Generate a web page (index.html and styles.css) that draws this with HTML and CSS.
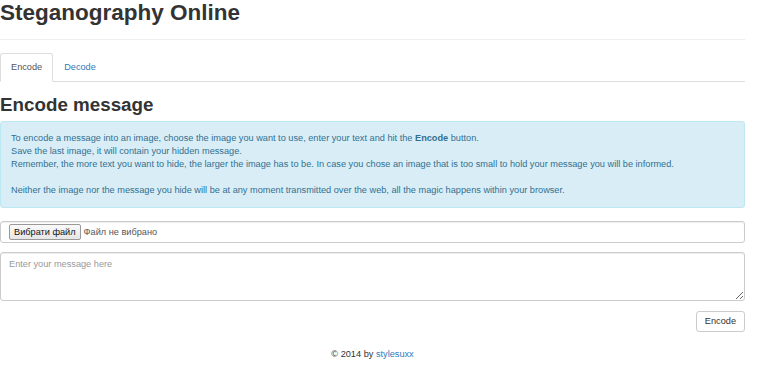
FILE: index.html
```html
<!DOCTYPE html>
<html lang="en">
<head>
    <meta charset="UTF-8">
    <title>Steganography Online</title>
    <link rel="stylesheet" href="styles.css">
</head>
<body>
    <div class="container">
        <div class="page-header">
            <h1>Steganography Online</h1>
        </div>

        <!-- Tabs -->
        <ul class="nav-tabs">
            <li class="active"><a href="#">Encode</a></li>
            <li><a href="#">Decode</a></li>
        </ul>

        <h2>Encode message</h2>

        <div class="alert">
            To encode a message into an image, choose the image you want to use, enter your text and hit the <strong>Encode</strong> button.<br>
            Save the last image, it will contain your hidden message.<br>
            Remember, the more text you want to hide, the larger the image has to be. In case you chose an image that is too small to hold your message you will be informed.<br>
            <br>
            Neither the image nor the message you hide will be at any moment transmitted over the web, all the magic happens within your browser.
        </div>

        <div class="form-control file-field">
            <button class="file-btn" type="button">Вибрати файл</button>
            <span class="file-name">Файл не вибрано</span>
        </div>

        <textarea class="form-control message" placeholder="Enter your message here"></textarea>

        <div class="actions">
            <button class="btn" type="button">Encode</button>
        </div>

        <footer class="footer">
            &copy; 2014 by <a href="#">stylesuxx</a>
        </footer>
    </div>
</body>
</html>
```

FILE: styles.css
```css
* {
    box-sizing: border-box;
}

body {
    margin: 0;
    font-family: 'Liberation Sans', Arial, sans-serif;
    font-size: 9.2px;
    line-height: 13px;
    color: #333;
    background: #fff;
}

a {
    color: #337ab7;
    text-decoration: none;
}

.container {
    width: 745px;
}

/* Header */
.page-header {
    padding-bottom: 13px;
    border-bottom: 1px solid #eee;
}

h1 {
    margin: 0;
    font-size: 22.5px;
    line-height: 26px;
    font-weight: bold;
    color: #333;
}

/* Tabs */
.nav-tabs {
    list-style: none;
    margin: 13px 0 0;
    padding: 0;
    display: flex;
    border-bottom: 1px solid #ddd;
}

.nav-tabs li {
    margin-bottom: -1px;
}

.nav-tabs a {
    display: block;
    padding: 7px 10px;
    line-height: 13px;
    border: 1px solid transparent;
    border-radius: 3px 3px 0 0;
}

.nav-tabs .active a {
    color: #555;
    background: #fff;
    border-color: #ddd #ddd transparent;
}

h2 {
    margin: 11px 0 4px;
    font-size: 18.8px;
    line-height: 24px;
    font-weight: bold;
}

.alert {
    padding: 10px;
    margin-bottom: 13px;
    background: #d9edf7;
    border: 1px solid #bce8f1;
    border-radius: 3px;
    color: #31708f;
}

.alert strong {
    font-weight: bold;
}

/* Form */
.form-control {
    display: block;
    width: 100%;
    border: 1px solid #ccc;
    border-radius: 3px;
    background: #fff;
    box-shadow: inset 0 1px 1px rgba(0, 0, 0, 0.075);
}

.file-field {
    height: 22px;
    padding: 2px 8px;
    display: flex;
    align-items: center;
    margin-bottom: 9px;
}

.file-btn {
    font-family: 'Liberation Sans', Arial, sans-serif;
    font-size: 9.2px;
    line-height: 12px;
    padding: 1px 4px;
    margin: 0 3px 0 0;
    border: 1px solid #999;
    border-radius: 2px;
    background: linear-gradient(#fafafa, #e6e6e6);
    color: #111;
}

.file-name {
    color: #555;
}

.message {
    height: 49px;
    padding: 5px 8px;
    resize: vertical;
    font-family: 'Liberation Sans', Arial, sans-serif;
    font-size: 9.2px;
    line-height: 13px;
    color: #555;
}

.message::placeholder {
    color: #999;
}

.actions {
    display: flex;
    justify-content: flex-end;
    margin-top: 10px;
}

.btn {
    font-family: 'Liberation Sans', Arial, sans-serif;
    font-size: 9.2px;
    line-height: 13px;
    padding: 3px 8px;
    color: #333;
    background: #fff;
    border: 1px solid #ccc;
    border-radius: 3px;
}

.footer {
    text-align: center;
    margin-top: 16px;
}
```
